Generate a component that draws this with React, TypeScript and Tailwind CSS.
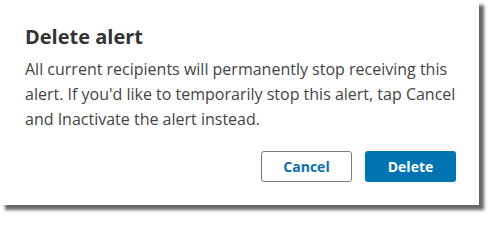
import React from "react";

export default function App() {
  return (
    <div className="w-[489px] h-[215px] bg-white" style={{ fontFamily: '"Open Sans", sans-serif' }}>
      <div className="w-[479px] h-[205px] bg-white shadow-[5px_5px_3px_rgba(0,0,0,0.6)] flex flex-col">
        <div className="pl-[25px] pr-[16px] pt-[25px]">
          <h2 className="text-[20px] leading-[24px] font-bold text-[#333333]">Delete alert</h2>
          <p className="mt-[8px] text-[16px] leading-[25px] text-[#444444]">
            All current recipients will permanently stop receiving this alert. If you'd like to temporarily stop this alert, tap Cancel and Inactivate the alert instead.
          </p>
        </div>
        <div className="flex justify-end gap-[13px] pr-[23px] mt-[19px]">
          <button className="w-[91px] h-[31px] rounded-[3px] border border-[#7a7a7a] bg-white text-[14px] font-bold text-[#0a6fad]">
            Cancel
          </button>
          <button className="w-[91px] h-[31px] rounded-[3px] bg-[#0073b1] text-[14px] font-bold text-white">
            Delete
          </button>
        </div>
      </div>
    </div>
  );
}
